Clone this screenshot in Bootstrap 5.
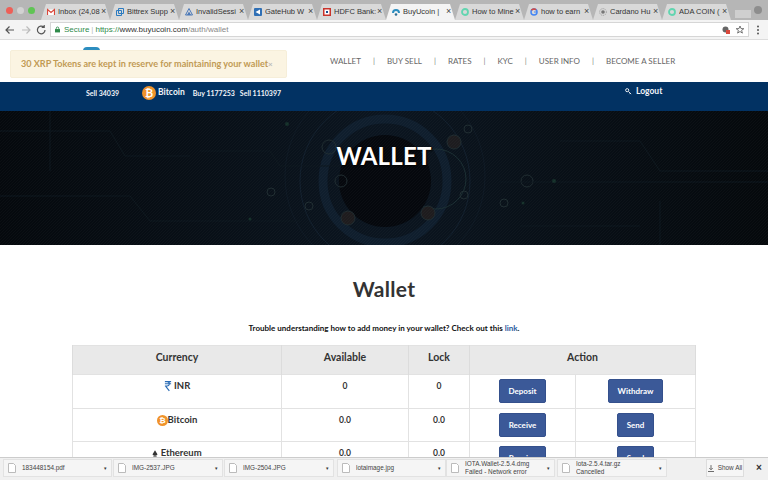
<!DOCTYPE html>
<html>
<head>
  <title>BuyUcoin | Wallet</title>
  <link rel="stylesheet" href="https://cdn.jsdelivr.net/npm/bootstrap@5.3.0/dist/css/bootstrap.min.css">
  <style>
    html, body { width: 768px; height: 480px; overflow: hidden; }
    body { font-family: "Lato", "Open Sans", sans-serif; color: #333; background: #fff; position: relative; }
    .chrome-font { font-family: "Liberation Sans", sans-serif; }
    .tabstrip { height: 20px; background: #b6b6b6; padding: 4px 0 0 41px; }
    .dots { position: absolute; left: 6px; top: 7px; }
    .dots i { width: 7px; height: 7px; border-radius: 50%; }
    .tabby { width: 69px; height: 16px; background: #d9d9d9; padding: 0 3px 0 6px; font-size: 7.500px; color: #333;
      clip-path: polygon(0 100%, 5px 0, calc(100% - 5px) 0, 100% 100%); white-space: nowrap; overflow: hidden; }
    .tabby.on { background: #f4f4f4; }
    .tabby svg { flex: none; }
    .tabby b { font-weight: 400; flex: 1; overflow: hidden; margin-left: 3px; }
    .tabby em { font-style: normal; font-size: 9px; color: #444; width: 6px; flex: none; }
    .newtab { width: 16px; height: 8px; margin: 6px 0 0 4px; background: #cfcfcf; }
    .acct { position: absolute; left: 754px; top: 6px; width: 8px; height: 8px; border-radius: 50%; background: #8d8d8d; }
    .toolbar { height: 20px; background: #f4f4f4; border-bottom: 1px solid #ddd; padding: 2px 0 2px 4px; }
    .omni { flex: 1; height: 15px; margin: 0 7px 0 0; background: #fff; border: 1px solid #d6d6d6; font-size: 8px; padding: 0 2px 0 4px; }
    .omni .sec { color: #2f8a4a; }
    .omni .sep { color: #bbb; margin: 0 2px; }
    .omni .dim { color: #888; }
    .topnav { height: 42px; padding-left: 330px; background: #fff; }
    .topnav a { font-size: 8px; color: #666; text-decoration: none; white-space: nowrap; }
    .topnav span { font-size: 8px; color: #888; margin: 0 12px; }
    .msgbox { position: absolute; left: 10px; top: 50px; width: 277px; height: 28px; background: #fbf4e2; border: 1px solid #f6eed9;
      color: #c19a54; font-size: 9.100px; font-weight: 700; padding: 0 10px; border-radius: 2px; white-space: nowrap; }
    .msgbox small { color: #bbb; font-size: 8px; }
    .logo-peek { position: absolute; left: 83px; top: 47px; width: 17px; height: 4px; background: #2c8dbf; border-radius: 9px 9px 0 0; }
    .coinbar { height: 29px; background: #023263; color: #f1f4f8; font-size: 7px; font-weight: 700; position: relative; padding: 0 0 7px 86px; }
    .coinbar .nm { font-size: 8.500px; margin: 0 8px 2px 2px; }
    .coinbar .lgt { position: absolute; left: 625px; top: 3px; font-size: 8.500px; }
    .hero { height: 134px; background: #05090f; position: relative; }
    .hero svg { position: absolute; inset: 0; }
    .hero h1 { position: relative; margin: 0; padding-top: 31px; text-align: center; color: #fff; font-size: 24px; font-weight: 700; letter-spacing: .2px; text-shadow: 1px 1px 2px #000; }
    .walletbody { padding: 30px 72px 0 72px; background: #fff; }
    .walletbody h2 { font-size: 21px; font-weight: 700; color: #333; margin: 0; line-height: 28px; text-align: center; letter-spacing: .3px; }
    .walletbody p { font-size: 8px; font-weight: 700; color: #111; text-align: center; margin: 20px 0 12px; line-height: 10px; }
    .walletbody p a { color: #2a5a9e; text-decoration: none; }
    .coins { width: 624px; table-layout: fixed; margin: 0; border-color: #e2e2e2; color: #333; }
    .coins th { background: #e9e9e9; font-size: 10.500px; font-weight: 700; height: 29px; padding: 0 0 5px; vertical-align: middle; text-align: center; border-color: #dcdcdc; }
    .coins td { font-size: 8.500px; font-weight: 700; text-align: center; padding: 4px 0 0; height: 33.500px; vertical-align: top; line-height: 14px; }
    .coins .cur { font-size: 9.500px; }
    .coins .cur svg { vertical-align: -3px; }
    .act { display: inline-block; background: #3b5998; border: 1px solid #34508c; color: #fff; font-size: 8px; font-weight: 700; height: 24px; line-height: 22px; padding: 0 9px; border-radius: 2px; }
    .coins td.bt { padding-top: 0; vertical-align: middle; }
    .dlbar { position: absolute; left: 0; right: 0; top: 457px; height: 23px; background: #f0f0f0; border-top: 1px solid #ccc; padding: 1px 0 0 3px; font-size: 6.400px; color: #444; }
    .dlitem { height: 18px; background: #f5f5f5; border: 1px solid #e2e2e2; padding: 0 4px; line-height: 8px; white-space: nowrap; }
    .dlitem svg { flex: none; margin-right: 6px; }
    .dlitem .nm2 { flex: 1; overflow: hidden; }
    .dlitem u { text-decoration: none; font-size: 5px; color: #333; }
    .showall { position: absolute; left: 706px; top: 1px; width: 38px; height: 18px; background: #f6f6f6; border: 1px solid #ddd; font-size: 6.400px; }
    .closeall { position: absolute; left: 756px; top: 4px; font-size: 10px; font-weight: 700; color: #333; line-height: 12px; }
  </style>
</head>
<body>
  <div class="tabstrip d-flex chrome-font">
    <div class="dots d-flex gap-1">
      <i class="d-block" style="background:#ee5f57"></i><i class="d-block" style="background:#d2d2d2"></i><i class="d-block" style="background:#5fc454"></i>
    </div>
    <div id="tabs" class="d-flex"></div>
    <div class="newtab"></div>
    <div class="acct"></div>
  </div>
  <div class="toolbar d-flex align-items-center chrome-font">
    <svg width="46" height="12" viewBox="0 0 46 12" fill="none" stroke-width="1.200">
      <path d="M10 6H2M5.500 2.500 2 6l3.500 3.500" stroke="#555"/>
      <path d="M18 6h8M22.500 2.500 26 6l-3.500 3.500" stroke="#bbb"/>
      <path d="M41 6a3.800 3.800 0 1 1-1.200-2.800M40.200 1v2.500h-2.500" stroke="#555"/>
    </svg>
    <div class="omni d-flex align-items-center">
      <svg width="5" height="7" viewBox="0 0 6 7" class="me-1"><rect y="3" width="6" height="4" fill="#2f8a4a"/><path d="M1.500 3V2a1.500 1.500 0 0 1 3 0v1" fill="none" stroke="#2f8a4a"/></svg>
      <span class="sec">Secure</span><span class="sep">|</span><span class="sec">https://</span><span>www.buyucoin.com</span><span class="dim">/auth/wallet</span>
      <svg class="ms-auto" width="24" height="10" viewBox="0 0 24 10"><circle cx="3.500" cy="4.500" r="3" fill="#666"/><rect x="4" y="5" width="4" height="4" fill="#d9483b"/><path d="m18 1 1 2.600 2.800.1-2.200 1.700.8 2.700-2.400-1.600-2.400 1.600.8-2.700-2.200-1.700 2.800-.1z" fill="none" stroke="#555" stroke-width=".8"/></svg>
    </div>
    <svg width="4" height="10" viewBox="0 0 4 10" class="me-2"><circle cx="2" cy="1.500" r="1" fill="#555"/><circle cx="2" cy="5" r="1" fill="#555"/><circle cx="2" cy="8.500" r="1" fill="#555"/></svg>
  </div>

  <div class="topnav d-flex align-items-center">
    <a href="#">WALLET</a><span>|</span><a href="#">BUY SELL</a><span>|</span><a href="#">RATES</a><span>|</span><a href="#">KYC</a><span>|</span><a href="#">USER INFO</a><span>|</span><a href="#">BECOME A SELLER</a>
  </div>
  <div class="logo-peek"></div>
  <div class="msgbox d-flex align-items-center">30 XRP Tokens are kept in reserve for maintaining your wallet<small>×</small></div>

  <div class="coinbar d-flex align-items-center">
    <span style="margin-right:23px">Sell 34039</span>
    <svg width="14" height="14" viewBox="0 0 14 14"><circle cx="7" cy="7" r="7" fill="#f0932b"/><text x="7" y="10.500" text-anchor="middle" font-size="10" font-weight="700" fill="#fff">₿</text></svg>
    <span class="nm">Bitcoin</span>
    <span style="margin-right:5px">Buy 1177253</span><span>Sell 1110397</span>
    <span class="lgt d-flex align-items-center gap-1">
      <svg width="7" height="7" viewBox="0 0 8 8" fill="none" stroke="#fff"><circle cx="2.500" cy="2.500" r="1.800"/><path d="m4 4 3 3M6 6 5 7"/></svg>Logout
    </span>
  </div>

  <div class="hero">
    <svg width="768" height="134" viewBox="0 0 768 134" fill="none">
      <defs>
        <linearGradient id="shade" x1="0" x2="1"><stop offset="0" stop-color="#05090d"/><stop offset=".5" stop-color="#0b1520"/><stop offset="1" stop-color="#05090c"/></linearGradient>
        <pattern id="hatch" width="3" height="3" patternUnits="userSpaceOnUse"><path d="M0 3 3 0" stroke="#fff" stroke-opacity=".025"/></pattern>
      </defs>
      <rect width="768" height="134" fill="url(#shade)"/>
      <g stroke="#101f2d">
        <circle cx="385" cy="65" r="100" stroke="#0e1924"/>
        <circle cx="385" cy="70" r="85" stroke="#12202e"/>
        <circle cx="385" cy="70" r="62" stroke-width="9" stroke="#0f1e2d"/>
        <circle cx="436" cy="68" r="30" stroke="#1a2e32"/>
      </g>
      <circle cx="385" cy="70" r="46" fill="#05080d"/>
      <g stroke="#1f2c30">
        <circle cx="329" cy="36" r="7"/><circle cx="454" cy="31" r="7" fill="#1d1c1f"/><circle cx="341" cy="70" r="6"/>
        <circle cx="348" cy="107" r="7" fill="#1e1c1e"/><circle cx="428" cy="102" r="7" fill="#1e1c1e"/><circle cx="271" cy="81" r="4"/>
        <circle cx="309" cy="95" r="4"/><circle cx="468" cy="18" r="4"/><circle cx="464" cy="84" r="4"/><circle cx="504" cy="92" r="4"/><circle cx="527" cy="70" r="6"/>
      </g>
      <g stroke="#0d171e">
        <path d="M200 40H270L280 55H340M0 20H110L125 45H190M500 71H768M560 30H640L660 60H768M0 85H130L150 110H300M520 115H640M50 0V60M660 90V134"/>
      </g>
      <g fill="#15302a"><circle cx="287" cy="13" r="2"/><circle cx="554" cy="70" r="2"/><circle cx="523" cy="92" r="1.500"/><circle cx="250" cy="108" r="1.500"/></g>
      <rect width="768" height="134" fill="url(#hatch)"/>
    </svg>
    <h1>WALLET</h1>
  </div>

  <div class="walletbody">
    <h2>Wallet</h2>
    <p>Trouble understanding how to add money in your wallet? Check out this <a href="#">link</a>.</p>
    <table class="table table-bordered coins">
      <colgroup><col style="width:209px"><col style="width:127px"><col style="width:61px"><col style="width:106px"><col style="width:120px"></colgroup>
      <thead>
        <tr><th>Currency</th><th>Available</th><th>Lock</th><th colspan="2">Action</th></tr>
      </thead>
      <tbody>
        <tr>
          <td class="cur"><svg width="8" height="12" viewBox="0 0 9 13" fill="none" stroke="#2b6cb5" stroke-width="1.300"><path d="M1 1.500h7M1 4h7M1 6.500h2.500a2.500 2.500 0 0 0 0-5M2 7l4 5"/></svg> INR</td>
          <td>0</td><td>0</td>
          <td class="bt"><span class="act">Deposit</span></td><td class="bt"><span class="act">Withdraw</span></td>
        </tr>
        <tr>
          <td class="cur"><svg width="11" height="11" viewBox="0 0 14 14"><circle cx="7" cy="7" r="7" fill="#f0932b"/><text x="7" y="10.500" text-anchor="middle" font-size="10" font-weight="700" fill="#fff">₿</text></svg>Bitcoin</td>
          <td>0.0</td><td>0.0</td>
          <td class="bt"><span class="act">Receive</span></td><td class="bt"><span class="act">Send</span></td>
        </tr>
        <tr>
          <td class="cur"><svg width="6" height="9" viewBox="0 0 7 10"><path d="M3.500 0 6.500 5 3.500 6.800.5 5zM1 6l2.500 1.600L6 6 3.500 10z" fill="#333"/></svg> Ethereum</td>
          <td>0.0</td><td>0.0</td>
          <td class="bt"><span class="act">Receive</span></td><td class="bt"><span class="act">Send</span></td>
        </tr>
      </tbody>
    </table>
  </div>

  <div class="dlbar d-flex chrome-font" id="dl">
    <div class="showall d-flex align-items-center justify-content-center gap-1">
      <svg width="6" height="7" viewBox="0 0 7 8" fill="none" stroke="#555"><path d="M3.500 0v5M1.500 3.500l2 2 2-2M0 7.500h7"/></svg>Show All
    </div>
    <div class="closeall">×</div>
  </div>

  <script src="https://cdn.jsdelivr.net/npm/bootstrap@5.3.0/dist/js/bootstrap.bundle.min.js"></script>
  <script>
    const ring = c => `<circle cx="4" cy="4" r="3" fill="none" stroke="${c}" stroke-width="1.800"/>`;
    const tabs = [
      ['Inbox (24,08', '<path d="M.5 1.500h7v5.500h-7z" fill="#fff"/><path d="M.5 7V1.500L4 4.500l3.500-3V7" fill="none" stroke="#d9483b" stroke-width="1.200"/>'],
      ['Bittrex Supp', '<path d="M.5 2.500h5v5h-5zM2.500.5h5v5h-5z" fill="none" stroke="#2b7bc0"/>'],
      ['InvalidSessi', '<path d="M4 .5 7.500 7H.5z" fill="none" stroke="#4a78b8"/><path d="M4 3.500 6 7H2z" fill="#4a78b8"/>'],
      ['GateHub W', '<rect width="8" height="8" rx="1" fill="#2f6fb5"/><path d="M1.500 4 6 1.500v5z" fill="#fff"/>'],
      ['HDFC Bank:', '<rect width="8" height="8" fill="#c9332b"/><rect x="1.500" y="1.500" width="5" height="5" fill="#fff"/><rect x="3" y="3" width="2" height="2" fill="#1d4e8f"/>'],
      ['BuyUcoin |', '<path d="M1 5a3 3 0 1 1 6 0" fill="none" stroke="#2c8dbf" stroke-width="2"/><circle cx="4" cy="6.500" r="1.300" fill="#2c6f95"/>', 1],
      ['How to Mine', ring('#62d5b0')],
      ['how to earn', '<circle cx="4" cy="4" r="3" fill="none" stroke="#4285f4" stroke-width="1.500"/><path d="M4 4h3.200" stroke="#4285f4"/><path d="M1.500 2.300A3 3 0 0 1 6 1.800" fill="none" stroke="#d9483b" stroke-width="1.500"/>'],
      ['Cardano Hu', '<circle cx="4" cy="4" r="1.800" fill="#777"/><circle cx="4" cy="4" r="3.400" fill="none" stroke="#999" stroke-dasharray="1 1"/>'],
      ['ADA COIN (', ring('#62d5b0')]
    ];
    document.getElementById('tabs').innerHTML = tabs.map(t =>
      `<div class="tabby d-flex align-items-center${t[2] ? ' on' : ''}">
        <svg width="8" height="8">${t[1]}</svg><b>${t[0]}</b><em>×</em>
      </div>`).join('');

    const files = [
      [109, 3, '183448154.pdf'], [110, 1, 'IMG-2537.JPG'], [110, 1, 'IMG-2504.JPG'], [109, 3, 'lotaimage.jpg'],
      [109, 0, 'IOTA.Wallet-2.5.4.dmg', 'Failed - Network error'], [110, 2, 'Iota-2.5.4.tar.gz', 'Cancelled']
    ];
    const bar = document.getElementById('dl');
    bar.insertAdjacentHTML('afterbegin', files.map((f, i) =>
      `<div class="dlitem d-flex align-items-center" style="width:${f[0]}px;margin-left:${i ? f[1] : 0}px">
        <svg width="8" height="10"><path d="M.5.5h5l2 2v7h-7z" fill="#fff" stroke="#bbb"/></svg>
        <div class="nm2">${f[2]}${f[3] ? '<br>' + f[3] : ''}</div><u>▾</u>
      </div>`).join(''));
  </script>
</body>
</html>
